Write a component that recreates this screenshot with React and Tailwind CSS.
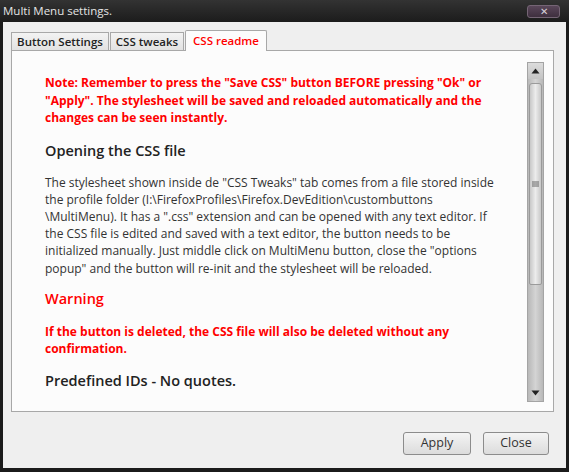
export default function App() {
  const font = { fontFamily: '"Open Sans", "Noto Sans", sans-serif' };
  return (
    <div className="w-[569px] h-[472px] bg-[#1b1b1b] flex flex-col font-['Open_Sans',sans-serif]">
      <div className="h-[22px] shrink-0 flex items-center justify-between pl-[3px] pr-[9px] bg-gradient-to-b from-[#333333] to-[#1c1c1c]">
        <span className="text-[11.5px] text-[#e4e4e4] leading-none">Multi Menu settings.</span>
        <div className="w-[33px] h-[13px] rounded-[3px] border border-[#756575] bg-gradient-to-b from-[#5a475a] to-[#3e2f3e] flex items-center justify-center">
          <span className="text-[10px] leading-none text-[#d8d0d8]">✕</span>
        </div>
      </div>
      <div className="flex-1 mx-[3px] mb-[4px] bg-[#efefef] flex flex-col pl-[8px] pr-[12px] pt-[8px]">
        <div className="h-[20px] flex items-end shrink-0">
          <div className="h-[18px] w-[98px] border border-b-0 border-[#a8a8a8] bg-gradient-to-b from-[#f3f3f3] to-[#e2e2e2] flex items-center justify-center text-[11.5px] font-semibold text-[#222]">Button Settings</div>
          <div className="h-[18px] w-[74px] ml-[1px] border border-b-0 border-[#a8a8a8] bg-gradient-to-b from-[#f3f3f3] to-[#e2e2e2] flex items-center justify-center text-[11.5px] font-semibold text-[#222]">CSS tweaks</div>
          <div className="h-[21px] w-[82px] ml-[1px] -mb-[1px] relative z-10 border border-b-0 border-[#a8a8a8] rounded-t-[2px] bg-[#fcfcfc] flex items-center justify-center text-[11.5px] font-semibold text-[#ff0000]">CSS readme</div>
        </div>
        <div className="h-[362px] shrink-0 border border-[#a8a8a8] bg-[#fcfcfc] flex">
          <div className="flex-1 pl-[33px] pt-[23px] text-[12px] text-[#333]" style={font}>
            <div className="font-bold text-[#ff0000] leading-[17.5px] text-[12px]">
              <div className="whitespace-nowrap">Note: Remember to press the "Save CSS" button BEFORE pressing "Ok" or</div>
              <div className="whitespace-nowrap">"Apply". The stylesheet will be saved and reloaded automatically and the</div>
              <div className="whitespace-nowrap">changes can be seen instantly.</div>
            </div>
            <div className="mt-[13px] text-[14.5px] font-semibold text-[#222] leading-[22px]">Opening the CSS file</div>
            <div className="mt-[12px] leading-[17.2px]">
              <div className="whitespace-nowrap">The stylesheet shown inside de "CSS Tweaks" tab comes from a file stored inside</div>
              <div className="whitespace-nowrap">the profile folder (I:\FirefoxProfiles\Firefox.DevEdition\custombuttons</div>
              <div className="whitespace-nowrap">\MultiMenu). It has a ".css" extension and can be opened with any text editor. If</div>
              <div className="whitespace-nowrap">the CSS file is edited and saved with a text editor, the button needs to be</div>
              <div className="whitespace-nowrap">initialized manually. Just middle click on MultiMenu button, close the "options</div>
              <div className="whitespace-nowrap">popup" and the button will re-init and the stylesheet will be reloaded.</div>
            </div>
            <div className="mt-[11px] text-[14.5px] font-semibold text-[#ff0000] leading-[22px]">Warning</div>
            <div className="mt-[13px] font-bold text-[#ff0000] leading-[17.5px] text-[12px]">
              <div className="whitespace-nowrap">If the button is deleted, the CSS file will also be deleted without any</div>
              <div className="whitespace-nowrap">confirmation.</div>
            </div>
            <div className="mt-[12px] text-[14.5px] font-semibold text-[#222] leading-[22px]">Predefined IDs - No quotes.</div>
          </div>
          <div className="w-[17px] mt-[11px] mb-[9px] mr-[9px] border border-[#a4a4a4] flex flex-col bg-gradient-to-r from-[#b8b8b8] via-[#d4d4d4] to-[#b8b8b8]">
            <div className="h-[16px] shrink-0 flex items-center justify-center bg-gradient-to-b from-[#dcdcdc] to-[#c4c4c4]">
              <svg width="9" height="6" viewBox="0 0 9 6"><path d="M0.5 5.5 L4.5 0.5 L8.5 5.5 Z" fill="#222" /></svg>
            </div>
            <div className="h-[202px] mt-[4px] shrink-0 mx-[1px] rounded-t-[3px] rounded-b-[2px] border border-[#9a9a9a] bg-gradient-to-r from-[#c8c8c8] via-[#ececec] to-[#c8c8c8] flex items-center justify-center">
              <svg width="7" height="6" viewBox="0 0 7 6"><path d="M0 1H7M0 3H7M0 5H7" stroke="#666" strokeWidth="1" /></svg>
            </div>
            <div className="flex-1"></div>
            <div className="h-[16px] shrink-0 flex items-center justify-center">
              <svg width="9" height="6" viewBox="0 0 9 6"><path d="M0.5 0.5 L4.5 5.5 L8.5 0.5 Z" fill="#222" /></svg>
            </div>
          </div>
        </div>
        <div className="flex justify-end gap-[12px] mt-[20px] pr-[5px]">
          <button className="w-[68px] h-[23px] rounded-[3px] border border-[#8c8c8c] bg-gradient-to-b from-[#f4f4f4] to-[#dcdcdc] text-[12.5px] text-[#333]">Apply</button>
          <button className="w-[66px] h-[23px] rounded-[3px] border border-[#8c8c8c] bg-gradient-to-b from-[#f4f4f4] to-[#dcdcdc] text-[12.5px] text-[#333]">Close</button>
        </div>
      </div>
    </div>
  );
}
